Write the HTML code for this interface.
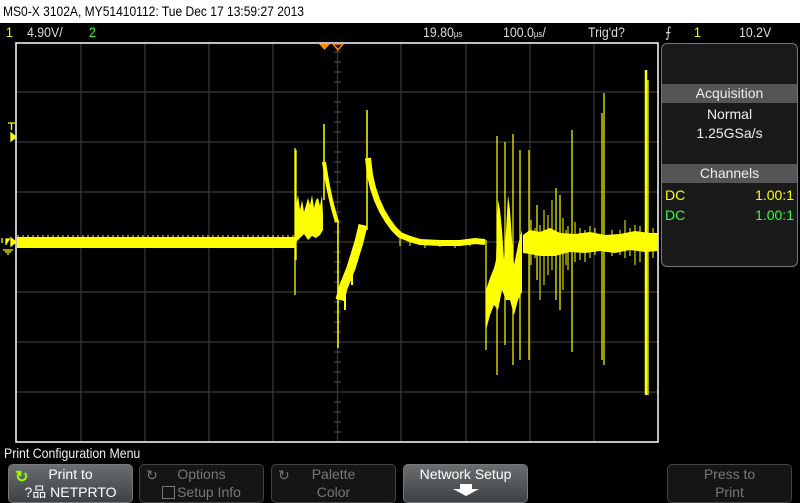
<!DOCTYPE html>
<html><head><meta charset="utf-8">
<style>
*{margin:0;padding:0;box-sizing:border-box}
body{width:800px;height:503px;background:#000;overflow:hidden;position:relative;font-family:"Liberation Sans Narrow","Liberation Sans",sans-serif}
.hdr{position:absolute;left:0;top:0;width:800px;height:23px;background:#fff;color:#000;font-size:14px;line-height:23px;padding-left:3px}
.n{display:inline-block;transform:scaleX(.86);transform-origin:left center;white-space:nowrap}
.t{position:absolute;font-size:14px;line-height:16px;white-space:nowrap;transform:scaleX(.88);transform-origin:left center}
.btn{position:absolute;top:464px;width:125px;height:39px;border-radius:5px;text-align:center;font-size:14px;line-height:18px}
.g{background:linear-gradient(#6a6e70,#3e4244);border:1px solid #777;color:#fff}
.d{background:#151515;border:1px solid #444;color:#777}
</style></head><body>
<div class="hdr"><span class="n">MS0-X 3102A, MY51410112: Tue Dec 17 13:59:27 2013</span></div>
<div class="t" style="left:6px;top:24px;color:#ff0">1</div>
<div class="t" style="left:27px;top:24px;color:#ddd">4.90V/</div>
<div class="t" style="left:89px;top:24px;color:#3f3">2</div>
<div class="t" style="left:423px;top:24px;color:#ddd">19.80<span style="font-size:9px">µs</span></div>
<div class="t" style="left:503px;top:24px;color:#ddd">100.0<span style="font-size:9px">µs</span>/</div>
<div class="t" style="left:588px;top:24px;color:#ddd">Trig'd?</div>
<div class="t" style="left:665px;top:24px;color:#ddd">⨍</div>
<div class="t" style="left:694px;top:24px;color:#ff0">1</div>
<div class="t" style="left:739px;top:24px;color:#ddd">10.2V</div>

<svg width="800" height="503" style="position:absolute;left:0;top:0">
<g stroke="#3a3a3a" stroke-width="1.2">
<line x1="81" y1="43" x2="81" y2="442"/><line x1="145" y1="43" x2="145" y2="442"/><line x1="209" y1="43" x2="209" y2="442"/><line x1="273" y1="43" x2="273" y2="442"/><line x1="337.5" y1="43" x2="337.5" y2="442"/><line x1="401" y1="43" x2="401" y2="442"/><line x1="466" y1="43" x2="466" y2="442"/><line x1="530" y1="43" x2="530" y2="442"/><line x1="594" y1="43" x2="594" y2="442"/>
<line x1="16" y1="92" x2="658" y2="92"/><line x1="16" y1="142" x2="658" y2="142"/><line x1="16" y1="192" x2="658" y2="192"/><line x1="16" y1="242" x2="658" y2="242"/><line x1="16" y1="292" x2="658" y2="292"/><line x1="16" y1="342" x2="658" y2="342"/><line x1="16" y1="392" x2="658" y2="392"/>
</g>
<g stroke="#555" stroke-width="1">
<path d="M334 52h7M334 62h7M334 72h7M334 82h7M334 102h7M334 112h7M334 122h7M334 132h7M334 152h7M334 162h7M334 172h7M334 182h7M334 202h7M334 212h7M334 222h7M334 232h7M334 252h7M334 262h7M334 272h7M334 282h7M334 302h7M334 312h7M334 322h7M334 332h7M334 352h7M334 362h7M334 372h7M334 382h7M334 402h7M334 412h7M334 422h7M334 432h7"/>
</g>
<rect x="16" y="43" width="642" height="399" fill="none" stroke="#fff" stroke-width="1.5"/>
<path d="M319 44h11l-5.5 6z" fill="#f80"/>
<path d="M333 44h10l-5 6z" fill="none" stroke="#f80" stroke-width="1.5"/>
<path d="M8 123h7M11.5 123v7M11 133l5 4-5 4z" stroke="#ff0" fill="#ff0" stroke-width="1.3"/>
<path d="M2 243v-5M6 245v-6h4M11 238l5 4-5 4zM3 250h10M5 252h6M7 254h2" stroke="#ff0" fill="#ff0" stroke-width="1.3"/>
<g fill="#ff0" stroke="#ff0">
<rect x="17" y="237" width="278" height="11" stroke="none"/>
<path d="M17 236h278" stroke-width="1" stroke-dasharray="2 3"/>
<path d="M295 148V295M296 150V260" stroke-width="1.3"/>
<polygon points="296,205 298,195 300,210 302,200 304,212 306,205 308,198 310,205 312,195 314,208 316,200 318,198 320,206 322,195 323,215 323,230 320,235 316,238 312,236 308,240 304,234 300,238 296,242" stroke="none"/>
<path d="M324 124V200" stroke-width="1.5"/>
<polyline points="324,162 326,175 328,186 331,200 334,212 337,222" fill="none" stroke-width="4"/>
<path d="M338 220V348" stroke-width="1.5"/>
<polyline points="340,300 343,288 347,278 351,268 355,255 359,242 363,225" fill="none" stroke-width="9"/>
<path d="M345 290V310M352 265V285M357 245V262M361 225V242" stroke-width="2"/>
<path d="M367 110V230" stroke-width="1.5"/>
<polyline points="368,158 370,175 373,188 377,200 382,211 388,221 394,229 400,235 410,239 420,242 440,243 460,243 475,241 485,242" fill="none" stroke-width="6"/>
<path d="M400 238v8M410 240v6M425 242v6M440 242v5M455 241v7M470 240v6" stroke-width="1"/>
<path d="M486 240V350M497 136V375M505 142V345M513 134V365M520 150V360M529 150V360M572 130V352M602 113V360M604 93V365M648 80V395M537 205V280M556 188V300M560 195V310" stroke-width="1.2"/>
<path d="M646 70V395" stroke-width="2.5"/>
<polygon points="486,290 490,278 494,268 496,260 498,200 500,210 502,230 504,260 506,232 508,195 510,210 512,240 514,265 516,255 518,245 522,230 522,292 518,300 514,315 510,300 506,300 502,290 498,310 494,305 490,315 486,330" stroke="none"/>
<polygon points="523,235 530,230 540,232 550,228 560,233 575,234 590,232 605,235 620,234 635,231 650,233 658,233 658,251 645,252 630,250 615,253 600,251 585,253 570,252 555,256 540,256 530,254 523,253" stroke="none"/>
<path d="M544 210V285M548 215V275M552 200V270M540 225V300M566 230V265M580 228V260M620 230V255M635 225V265M625 220V258M531 220V265M535 228V258M563 218V290M568 226V270M575 222V262M585 230V262M590 226V258M595 228V255M612 230V256M630 228V256M640 226V262M653 228V258" stroke-width="1"/>
</g>
</svg>

<div style="position:absolute;left:661px;top:43px;width:137px;height:224px;border:1px solid #777;border-radius:6px;background:#1a1a1a;overflow:hidden">
 <div style="position:absolute;left:0;top:40px;width:135px;height:19px;background:#555;color:#eee;text-align:center;font-size:14px;line-height:19px">Acquisition</div>
 <div style="position:absolute;left:0;top:61px;width:135px;text-align:center;color:#eee;font-size:14px;line-height:19px">Normal<br>1.25GSa/s</div>
 <div style="position:absolute;left:0;top:120px;width:135px;height:19px;background:#555;color:#eee;text-align:center;font-size:14px;line-height:19px">Channels</div>
 <div style="position:absolute;left:3px;top:141px;width:129px;color:#ff0;font-size:14px;line-height:20px">DC<span style="float:right">1.00:1</span></div>
 <div style="position:absolute;left:3px;top:161px;width:129px;color:#3f3;font-size:14px;line-height:20px">DC<span style="float:right">1.00:1</span></div>
</div>

<div class="t" style="left:4px;top:445px;color:#eee">Print Configuration Menu</div>
<div class="btn g" style="left:8px"><span style="position:absolute;left:6px;top:4px;color:#9f0;font-size:16px;font-weight:bold">↻</span>Print to<br>?品 NETPRTO</div>
<div class="btn d" style="left:139px"><span style="position:absolute;left:6px;top:1px">↻</span>Options<br><span style="display:inline-block;width:13px;height:13px;border:1px solid #777;vertical-align:-2px;margin-right:2px"></span>Setup Info</div>
<div class="btn d" style="left:271px"><span style="position:absolute;left:6px;top:1px">↻</span>Palette<br>Color</div>
<div class="btn g" style="left:403px">Network Setup<br><svg width="30" height="14" viewBox="0 0 30 14"><path d="M9 1h12v5h7L15 13 2 6h7z" fill="#fff"/></svg></div>
<div class="btn d" style="left:667px">Press to<br>Print</div>
</body></html>
